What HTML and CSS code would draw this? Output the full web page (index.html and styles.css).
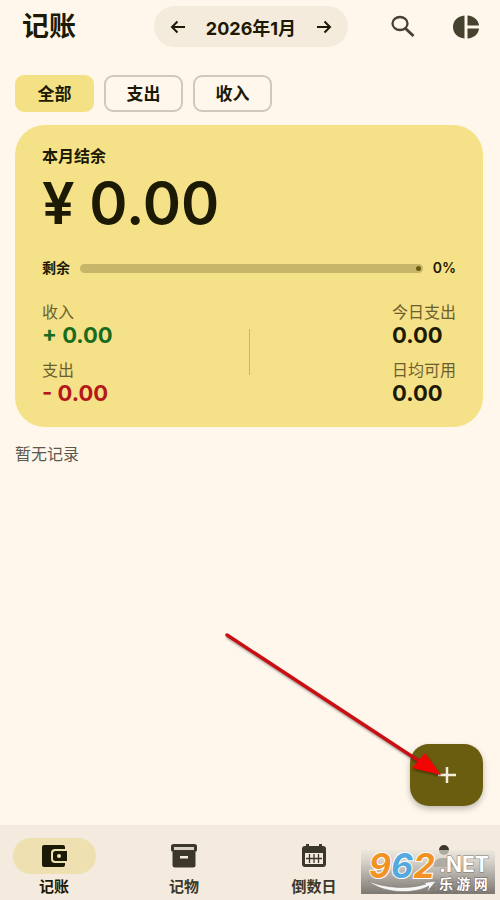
FILE: index.html
```html
<!DOCTYPE html>
<html lang="zh-CN">
<head>
<meta charset="utf-8">
<meta name="viewport" content="width=device-width, initial-scale=1">
<title>记账</title>
<link rel="stylesheet" href="styles.css">
</head>
<body>
<div class="app">
  <header class="topbar">
    <h1 class="title">记账</h1>
    <div class="month">
      <button class="icon-btn" aria-label="上个月"><svg width="16" height="16" viewBox="0 0 16 16"><path d="M15 8H2M7.500 2.500L2 8l5.500 5.500" fill="none" stroke="currentColor" stroke-width="2"/></svg></button>
      <span class="month-label">2026年1月</span>
      <button class="icon-btn" aria-label="下个月"><svg width="16" height="16" viewBox="0 0 16 16"><path d="M1 8h13M8.500 2.500L14 8l-5.500 5.500" fill="none" stroke="currentColor" stroke-width="2"/></svg></button>
    </div>
    <div class="actions">
      <button class="icon-btn" aria-label="搜索"><svg width="24" height="24" viewBox="0 0 24 24"><ellipse cx="9" cy="8.500" rx="7.500" ry="6.500" fill="none" stroke="currentColor" stroke-width="2.300"/><path d="M14 13l8.500 8" stroke="currentColor" stroke-width="3"/></svg></button>
      <button class="icon-btn" aria-label="统计"><svg width="28" height="24" viewBox="0 0 28 24"><path d="M12.500 .5v23C5.500 23 1 18 1 12S5.500 1 12.500 .5zM15.500 .5C22 1 26.500 5 27 10.500H15.500zM15.500 13.500H27C26.500 19 22 23 15.500 23.500z" fill="currentColor"/></svg></button>
    </div>
  </header>

  <main class="content">
    <div class="filters">
      <button class="chip chip-active">全部</button>
      <button class="chip">支出</button>
      <button class="chip">收入</button>
    </div>

    <section class="card">
      <h2 class="card-title">本月结余</h2>
      <p class="balance">¥ 0.00</p>
      <div class="progress">
        <span>剩余</span>
        <div class="track"></div>
        <span>0%</span>
      </div>
      <div class="stats">
        <dl class="stat-list">
          <dt>收入</dt><dd class="income">+ 0.00</dd>
          <dt>支出</dt><dd class="expense">- 0.00</dd>
        </dl>
        <div class="divider"></div>
        <dl class="stat-list stat-right">
          <dt>今日支出</dt><dd>0.00</dd>
          <dt>日均可用</dt><dd>0.00</dd>
        </dl>
      </div>
    </section>
    <p class="empty">暂无记录</p>
  </main>

  <button class="fab" aria-label="添加"><svg width="20" height="20" viewBox="0 0 20 20"><path d="M10 2v16M1 10h18" stroke="currentColor" stroke-width="2.500"/></svg></button>

  <nav class="tabs">
    <a class="tab" href="#book" aria-current="page">
      <span class="tab-icon tab-icon-active"><svg width="28" height="24" viewBox="0 0 28 24"><path d="M4 1h19q2 0 2 2v2H15q-4 0-4 4v6q0 4 4 4h10v2q0 2-2 2H4q-2 0-2-2V3q0-2 2-2z" fill="currentColor"/><path d="M15.500 7H27v10H15.500q-2.500 0-2.500-2.500v-5Q13 7 15.500 7z" fill="currentColor"/><circle cx="19" cy="12" r="2" fill="#f3e6b5"/></svg></span>
      <span>记账</span>
    </a>
    <a class="tab" href="#items">
      <span class="tab-icon"><svg width="28" height="24" viewBox="0 0 28 24"><rect x="1" y="0" width="26" height="8" rx="2.500" fill="currentColor"/><path d="M4 3h20v3H4z" fill="#d9d2c4"/><path d="M2.500 8h23v13q0 2.500-2.500 2.500H5q-2.500 0-2.500-2.500z" fill="currentColor"/><path d="M10 12h8v2.500h-8z" fill="#f4eadd"/></svg></span>
      <span>记物</span>
    </a>
    <a class="tab" href="#days">
      <span class="tab-icon"><svg width="28" height="24" viewBox="0 0 28 24"><path d="M6 0h3v3H6zM19 0h3v3h-3z" fill="currentColor"/><rect x="2" y="2" width="24" height="21" rx="3" fill="currentColor"/><path d="M5 9h18v11H5z" fill="#f4eadd"/><path d="M9.500 10v9M14 10v9M18.500 10v9M6 14.500h16" stroke="currentColor" stroke-width="1.300"/></svg></span>
      <span>倒数日</span>
    </a>
    <a class="tab" href="#me">
      <span class="tab-icon"><svg width="28" height="24" viewBox="0 0 28 24"><ellipse cx="14" cy="6" rx="5" ry="5" fill="currentColor"/><path d="M4 23v-4q2-5 10-5t10 5v4z" fill="currentColor"/></svg></span>
      <span>我的</span>
    </a>
  </nav>

  <svg class="pointer" width="226" height="156" viewBox="0 0 226 156" aria-hidden="true">
    <path d="M5 6L200 134" stroke="#c90f14" stroke-width="3.500" stroke-linecap="round"/>
    <path d="M203 124L219 146L190 139L196 132z" fill="#f40505"/>
  </svg>

  <svg class="watermark" width="134" height="44" viewBox="0 0 134 44" role="img" aria-label="962.NET 乐游网">
    <defs>
      <linearGradient id="plate" x1="0" y1="0" x2="0" y2="1"><stop offset="0" stop-color="#e9e5de" stop-opacity=".65"/><stop offset=".5" stop-color="#b5b1aa" stop-opacity=".93"/><stop offset="1" stop-color="#77736d" stop-opacity=".96"/></linearGradient>
    </defs>
    <rect width="134" height="44" fill="url(#plate)"/>
    <path d="M7 31C22 43 51 45 68 36L66 42L75 31L61 33L65 34C47 40 24 38 7 31z" fill="#f7f7f7" stroke="#77736f" stroke-width=".5"/>
    <text class="wm-number" x="8" y="28"><tspan class="wm-orange">9</tspan><tspan class="wm-blue">6</tspan><tspan class="wm-orange">2</tspan></text>
    <text class="wm-net" x="78" y="22">.NET</text>
    <text class="wm-name" x="78" y="39">乐 游 网</text>
  </svg>
</div>
</body>
</html>
```
FILE: styles.css
```css
* { box-sizing: border-box; }

body, h1, h2, p, dl, dd { margin: 0; }

body {
  background: #fff7eb;
  color: #1c1904;
  font-family: Inter, "Noto Sans CJK SC", sans-serif;
}

button {
  padding: 0;
  border: 0;
  background: none;
  color: inherit;
  font: inherit;
}

svg {
  display: block;
  overflow: visible;
}

.app {
  position: relative;
  display: flex;
  flex-direction: column;
  min-height: 100vh;
}

.topbar {
  display: grid;
  grid-template-columns: 1fr auto 1fr;
  align-items: center;
  padding: 6px 20px 0 22px;
}

.title {
  font-size: 27px;
  font-weight: 600;
  line-height: 40px;
}

.month {
  display: flex;
  align-items: center;
  justify-content: space-between;
  gap: 20px;
  height: 41px;
  padding: 0 16px;
  border-radius: 21px;
  background: #f4ebdc;
}

.month-label {
  font-size: 18px;
  font-weight: 700;
}

.actions {
  display: flex;
  justify-content: flex-end;
  gap: 37px;
  color: #45422f;
}

.content {
  flex: 1;
  padding: 28px 17px 0 15px;
}

.filters {
  display: flex;
  gap: 10px;
}

.chip {
  width: 79px;
  height: 37px;
  border: 2px solid #cfc9bc;
  border-radius: 9px;
  font-size: 17px;
  font-weight: 600;
  line-height: 32px;
}

.chip-active {
  border-color: #f5e185;
  background: #f5e185;
  font-weight: 700;
}

.card {
  margin-top: 13px;
  padding: 20px 27px 23px 27px;
  border-radius: 30px;
  background: #f5e187;
}

.card-title {
  font-size: 16px;
  font-weight: 700;
  line-height: 22px;
}

.balance {
  font-size: 58px;
  font-weight: 600;
  line-height: 72px;
}

.progress {
  display: flex;
  align-items: center;
  gap: 10px;
  margin-top: 18px;
  font-size: 14px;
  font-weight: 600;
  line-height: 22px;
}

.track {
  flex: 1;
  display: flex;
  align-items: center;
  justify-content: flex-end;
  height: 9px;
  padding-right: 2px;
  border-radius: 5px;
  background: #c7b56a;
}

.track::after {
  content: "";
  width: 5px;
  height: 5px;
  border-radius: 50%;
  background: #6b5c0c;
}

.stats {
  display: grid;
  grid-template-columns: 1fr 1px 1fr;
  align-items: center;
  margin-top: 21px;
}

.stat-list dt {
  color: #6a602f;
  font-size: 16px;
  line-height: 24px;
}

.stat-list dd {
  margin-bottom: 12px;
  font-size: 22px;
  font-weight: 700;
  line-height: 22px;
}

.stat-list dd:last-child { margin-bottom: 0; }

.stat-list .income { color: #196b20; }

.stat-list .expense { color: #b5171a; }

.stat-right { justify-self: end; }

.divider {
  height: 46px;
  background: #c7b56a;
}

.empty {
  margin-top: 16px;
  color: #5d594d;
  font-size: 16px;
  line-height: 22px;
}

.fab {
  position: absolute;
  right: 17px;
  bottom: 94px;
  display: grid;
  place-items: center;
  width: 73px;
  height: 62px;
  border-radius: 19px;
  background: #6b5d0f;
  color: #f3efdd;
  box-shadow: 0 3px 6px #00000040;
}

.tabs {
  display: grid;
  grid-template-columns: repeat(4, 1fr);
  gap: 22px;
  height: 75px;
  padding: 13px 2px 0 0;
  background: #f4eadd;
}

.tab {
  display: flex;
  flex-direction: column;
  align-items: center;
  gap: 2px;
  color: #3b382a;
  font-size: 15px;
  font-weight: 600;
  line-height: 22px;
  text-decoration: none;
}

.tab[aria-current] { color: #1c1904; }

.tab-icon {
  display: grid;
  place-items: center;
  width: 83px;
  height: 36px;
  border-radius: 18px;
}

.tab-icon-active { background: #eee0b0; }

.pointer {
  position: absolute;
  right: 52px;
  bottom: 115px;
  filter: drop-shadow(1px 2px 1px #00000060);
  pointer-events: none;
}

.watermark {
  position: absolute;
  right: 5px;
  bottom: 6px;
  pointer-events: none;
}

.wm-number {
  stroke: #fff;
  stroke-width: 2px;
  paint-order: stroke;
  font-size: 34px;
  font-style: italic;
  font-weight: 700;
}

.wm-orange { fill: #f39224; }

.wm-blue { fill: #56a9df; }

.wm-net {
  fill: #fff;
  stroke: #77736f;
  stroke-width: 1px;
  paint-order: stroke;
  font-size: 21px;
  font-weight: 700;
}

.wm-name {
  fill: #fff;
  stroke: #66625e;
  stroke-width: 1px;
  paint-order: stroke;
  font-size: 14px;
  font-weight: 700;
}
```
